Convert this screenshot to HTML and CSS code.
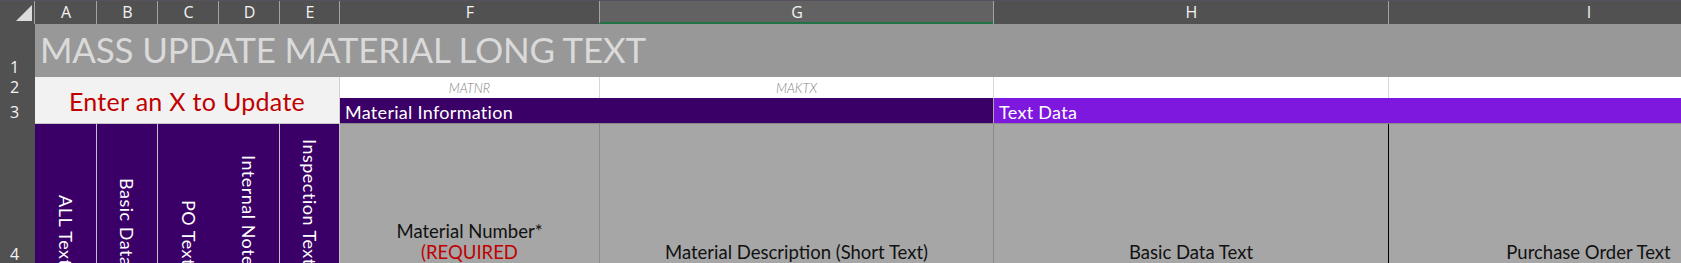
FILE: index.html
```html
<!DOCTYPE html>
<html lang="en">

<head>
  <meta charset="UTF-8">
  <title>Mass Update Material Long Text</title>
  <link rel="stylesheet" href="styles.css">
</head>

<body>
  <div class="topline"></div>
  <div class="sheet">
    <!-- column headers -->
    <div class="corner">
      <svg width="16" height="16" viewBox="0 0 16 16"><polygon points="0,16 16,0 16,16" fill="#dcdcdc"/></svg>
    </div>
    <div class="colhead">A</div>
    <div class="colhead">B</div>
    <div class="colhead">C</div>
    <div class="colhead">D</div>
    <div class="colhead">E</div>
    <div class="colhead">F</div>
    <div class="colhead selected">G</div>
    <div class="colhead">H</div>
    <div class="colhead">I</div>

    <!-- row 1 -->
    <div class="rowhead row1">1</div>
    <div class="title">MASS UPDATE MATERIAL LONG TEXT</div>

    <!-- row 2 -->
    <div class="rowhead">2</div>
    <div class="update-note">Enter an X to Update</div>
    <div class="tech">MATNR</div>
    <div class="tech">MAKTX</div>
    <div class="tech"></div>
    <div class="tech"></div>

    <!-- row 3 -->
    <div class="rowhead row3">3</div>
    <div class="group group-material">Material Information</div>
    <div class="group group-text">Text Data</div>

    <!-- row 4 -->
    <div class="rowhead row4">4</div>
    <div class="flag"><span>ALL Text</span></div>
    <div class="flag"><span>Basic Data</span></div>
    <div class="flag"><span>PO Text</span></div>
    <div class="flag"><span>Internal Note</span></div>
    <div class="flag"><span>Inspection Text</span></div>
    <div class="field">Material Number*<br><span class="required">(REQUIRED</span></div>
    <div class="field">Material Description (Short Text)</div>
    <div class="field field-end">Basic Data Text</div>
    <div class="field">Purchase Order Text</div>
  </div>
</body>

</html>
```

FILE: styles.css
```css
body {
  margin: 0;
  overflow: hidden;
  background-color: #515151;
  font-family: 'Lato', sans-serif;
}

.topline {
  height: 1px;
  background-color: #57505f;
}

.sheet {
  display: grid;
  grid-template-columns: 35px 62px 61px 61px 61px 60px 260px 394px 395px 400px;
  grid-template-rows: 23px 53px 21px 26px 143px;
  width: 1789px;
}

.sheet > div {
  box-sizing: border-box;
}

/* headers */
.corner {
  display: flex;
  align-items: flex-end;
  justify-content: flex-end;
  padding: 0 3px 3px 0;
  background-color: #515151;
}

.colhead {
  display: flex;
  align-items: center;
  justify-content: center;
  background-color: #515151;
  border-left: 1px solid #a3a3a3;
  margin-left: -1px;
  color: #f4f4f4;
  font-family: 'Open Sans', sans-serif;
  font-size: 16px;
  padding-bottom: 1px;
}

.colhead.selected {
  background-color: #626262;
  border-bottom: 2px solid #217346;
  padding-bottom: 0;
}

.rowhead {
  display: flex;
  align-items: flex-end;
  padding: 0 0 2px 10px;
  background-color: #515151;
  color: #f4f4f4;
  font-family: 'Open Sans', sans-serif;
  font-size: 16px;
  line-height: 18px;
}

.rowhead.row1 {
  padding-bottom: 1px;
}

.rowhead.row3 {
  padding-bottom: 3px;
}

.rowhead.row4 {
  padding-bottom: 4px;
}

/* row 1 */
.title {
  grid-column: span 9;
  display: flex;
  align-items: center;
  padding: 0 0 3px 5px;
  background-color: #989898;
  color: #dadada;
  font-size: 35px;
  letter-spacing: -0.2px;
  white-space: nowrap;
}

/* rows 2 and 3 */
.update-note {
  grid-column: span 5;
  grid-row: span 2;
  display: flex;
  align-items: center;
  justify-content: center;
  padding-top: 1px;
  background-color: #f2f2f2;
  border-right: 1px solid #d0d0d0;
  border-bottom: 1px solid #c6c6c6;
  color: #c00000;
  font-size: 25px;
  letter-spacing: 0.3px;
}

.tech {
  display: flex;
  align-items: center;
  justify-content: center;
  background-color: #fff;
  border-right: 1px solid #d6d6d6;
  color: #828282;
  font-size: 13px;
  font-style: italic;
  font-weight: 300;
}

.group {
  grid-column: span 2;
  display: flex;
  align-items: center;
  padding: 2px 0 0 5px;
  border-bottom: 1px solid #8a8a8a;
  color: #fff;
  font-size: 18px;
  letter-spacing: 0.3px;
}

.group-material {
  background-color: #3a0068;
  border-right: 1px solid #a9a9a9;
}

.group-text {
  background-color: #7e18de;
}

/* row 4 */
.flag {
  display: flex;
  align-items: flex-end;
  justify-content: center;
  padding-bottom: 1px;
  background-color: #3a0068;
  border-right: 1px solid #c3c3c3;
  color: #fff;
  font-size: 18px;
  letter-spacing: 0.5px;
}

.flag:nth-child(5n) {
  border-right: none;
}

.flag span {
  writing-mode: vertical-rl;
  white-space: nowrap;
}

.field {
  display: flex;
  flex-direction: column;
  justify-content: flex-end;
  padding-bottom: 4px;
  text-align: center;
  background-color: #a6a6a6;
  border-right: 1px solid #8a8a8a;
  color: #111;
  font-size: 18.5px;
  line-height: 21px;
}

.field-end {
  border-right-color: #000;
}

.required {
  color: #c00000;
}
```
